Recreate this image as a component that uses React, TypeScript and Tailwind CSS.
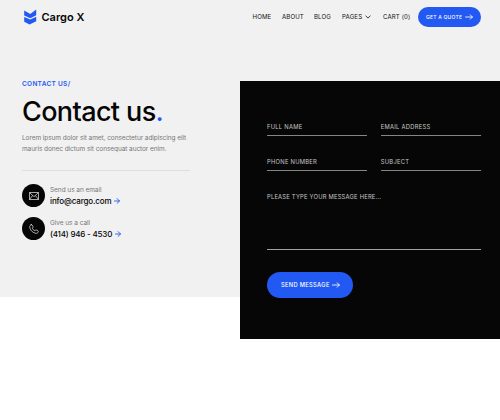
import React from "react";

function Arrow({ className }: { className: string }) {
  return (
    <svg viewBox="0 0 8 6" className={className} fill="none" stroke="currentColor" strokeWidth="0.85" strokeLinecap="round" strokeLinejoin="round">
      <path d="M0.5 3H7.4M5.2 0.8L7.4 3L5.2 5.2" />
    </svg>
  );
}

function ShortArrow() {
  return (
    <svg viewBox="0 0 6 6" className="size-1.5 text-[#2259f2]" fill="none" stroke="currentColor" strokeWidth="0.9" strokeLinecap="round" strokeLinejoin="round">
      <path d="M0.5 3H5.5M3.1 0.6L5.5 3L3.1 5.4" />
    </svg>
  );
}

function Logo() {
  return (
    <div className="flex h-4 items-center">
      <svg viewBox="0 0 13 16" className="h-4 w-[13px] shrink-0 fill-[#2259f2]">
        <path d="M0.2 1.6L6.3 4.9L12.2 0.5V6.2L6.3 9.2L0.2 6.5Z" />
        <path d="M0.2 8.1L6.3 10.6L12.2 7.7V12.2L5.6 15.4L0.2 12.7Z" />
      </svg>
      <span className="ml-[4.5px] text-[11px] leading-4 font-semibold whitespace-nowrap">Cargo X</span>
    </div>
  );
}

function Header() {
  return (
    <header className="flex h-[34px] items-center pl-6">
      <Logo />
      <nav className="ml-auto flex items-center text-[6.1px] leading-[10px] tracking-[0.12px] whitespace-nowrap text-[#111]">
        <a className="w-[29.5px]">HOME</a>
        <a className="w-8">ABOUT</a>
        <a className="w-7">BLOG</a>
        <a className="flex w-[41px] items-center">
          <span className="w-[23px]">PAGES</span>
          <svg viewBox="0 0 6 4" className="h-1 w-1.5" fill="none" stroke="currentColor" strokeWidth="0.8" strokeLinecap="round" strokeLinejoin="round">
            <path d="M0.8 0.9L3 3.1L5.2 0.9" />
          </svg>
        </a>
        <a className="w-[34.5px]">CART (0)</a>
      </nav>
      <button className="mr-[19.5px] flex h-5 w-[63px] items-center rounded-full bg-[#2259f2] pl-[8.5px] text-left text-[5px] leading-[10px] font-medium tracking-[0.22px] whitespace-nowrap text-white">
        <span className="w-[38.5px]">GET A QUOTE</span>
        <Arrow className="h-[6px] w-2" />
      </button>
    </header>
  );
}

function MailIcon() {
  return (
    <svg viewBox="0 0 10 8" className="h-2 w-2.5" fill="none" stroke="currentColor" strokeWidth="0.65" strokeLinejoin="round">
      <path d="M0.5 0.5H9.5V7.5H0.5ZM0.5 0.5L5 4.7L9.5 0.5M0.5 7.5L3.6 3.5M9.5 7.5L6.4 3.5" />
    </svg>
  );
}

function PhoneIcon() {
  return (
    <svg viewBox="0 0 10 10" className="size-2.5" fill="none" stroke="currentColor" strokeWidth="0.65" strokeLinejoin="round" strokeLinecap="round">
      <path d="M2.2 0.7C1 1.1 0.5 2 0.7 3.2C1.2 6.3 3.7 8.8 6.8 9.3C8 9.5 9 8.9 9.3 7.8C9.4 7.4 9.2 7 8.9 6.8L7.3 6C6.9 5.8 6.5 5.9 6.3 6.2L5.8 6.8C4.7 6.3 3.7 5.3 3.2 4.2L3.8 3.7C4.1 3.5 4.2 3.1 4 2.7L3.2 1.1C3 0.7 2.6 0.6 2.2 0.7Z" />
    </svg>
  );
}

function ContactRow({ icon, label, value, valueClass }: { icon: React.ReactNode; label: string; value: string; valueClass: string }) {
  return (
    <div className="flex h-[23px] items-center">
      <div className="flex size-[23px] shrink-0 items-center justify-center rounded-full bg-[#060606] text-white">{icon}</div>
      <div className="ml-[5px] whitespace-nowrap">
        <div className="text-[6.5px] leading-[11px] tracking-[-0.05px] text-[#777]">{label}</div>
        <div className="flex items-center leading-[11px]">
          <span className={valueClass}>{value}</span>
          <ShortArrow />
        </div>
      </div>
    </div>
  );
}

function Field({ label }: { label: string }) {
  return (
    <label className="flex h-[15px] border-b border-[#858585] text-[5.8px] leading-[12px] tracking-[0.27px] whitespace-nowrap text-[#c8c8c8]">
      {label}
    </label>
  );
}

function ContactForm() {
  return (
    <form className="mt-[47px] h-[258px] w-[260px] bg-[#060606] pt-[40px] pr-[19.5px] pl-[27px]">
      <div className="grid grid-cols-2 gap-x-[14px] gap-y-5">
        <Field label="FULL NAME" />
        <Field label="EMAIL ADDRESS" />
        <Field label="PHONE NUMBER" />
        <Field label="SUBJECT" />
      </div>
      <div className="mt-[19px] h-[60px] border-b border-[#a0a0a0] text-[5.8px] leading-[13px] tracking-[0.22px] text-[#c8c8c8]">
        PLEASE TYPE YOUR MESSAGE HERE...
      </div>
      <button type="button" className="mt-[22px] flex h-[26px] w-[86px] items-center rounded-full bg-[#2259f2] pl-[14px] text-left text-[5.7px] leading-[12px] font-medium tracking-[0.35px] whitespace-nowrap text-white">
        <span className="w-[51px]">SEND MESSAGE</span>
        <Arrow className="h-[6px] w-2" />
      </button>
    </form>
  );
}

export default function App() {
  return (
    <main className="h-[420px] w-[500px] overflow-hidden bg-[linear-gradient(#f1f1f1_297px,#ffffff_297px)] font-['Inter','Liberation_Sans',sans-serif] text-[#060606]">
      <Header />
      <div className="flex">
        <section className="w-[240px] pt-[45px] pl-[22px]">
          <p className="text-[6.5px] leading-[11px] font-semibold tracking-[0.3px] text-[#2259f2]">CONTACT US/</p>
          <h1 className="mt-1.5 text-[27px] leading-[32px] font-medium tracking-[-0.62px] whitespace-nowrap">
            Contact us<span className="text-[#2259f2]">.</span>
          </h1>
          <p className="mt-[5px] text-[6.5px] leading-[10.5px] tracking-[-0.07px] whitespace-nowrap text-[#777]">
            Lorem ipsum dolor sit amet, consectetur adipiscing elit
            <br />
            mauris donec dictum sit consequat auctor enim.
          </p>
          <div className="mt-4 mb-[13px] h-px w-[168px] bg-[#dedede]" />
          <div className="flex flex-col gap-2.5">
            <ContactRow icon={<MailIcon />} label="Send us an email" value="info@cargo.com" valueClass="w-[64px] text-[8px] font-medium tracking-[-0.13px]" />
            <ContactRow icon={<PhoneIcon />} label="Give us a call" value="(414) 946 - 4530" valueClass="w-[65px] text-[8px] font-medium tracking-[-0.2px]" />
          </div>
        </section>
        <ContactForm />
      </div>
    </main>
  );
}
